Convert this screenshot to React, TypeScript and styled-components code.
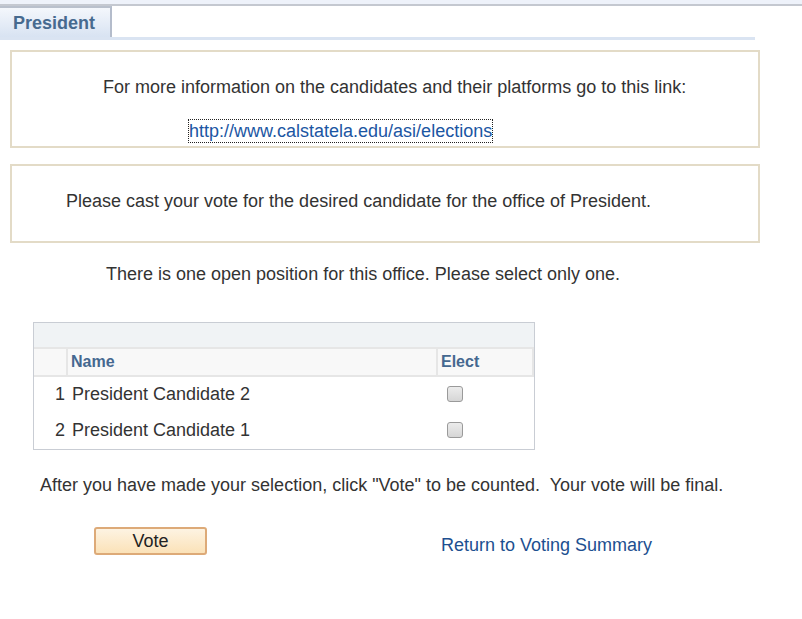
import React from "react";
import styled, { createGlobalStyle } from "styled-components";

const GlobalStyle = createGlobalStyle`
  html, body { margin: 0; padding: 0; background: #ffffff; }
  body {
    font-family: "Liberation Sans", Arial, sans-serif;
    font-size: 18px;
    color: #333333;
  }
`;

const Page = styled.div`
  width: 802px;
  min-height: 619px;
`;

const TopStrip = styled.div`
  height: 4px;
  background: #eef2fa;
  border-bottom: 2px solid #c4c8d0;
`;

const TabRow = styled.div`
  display: flex;
`;

const Tab = styled.div`
  box-sizing: border-box;
  width: 112px;
  height: 31px;
  padding: 6px 0 0 13px;
  border-top: 2px solid #b9c0cc;
  border-right: 2px solid #b4bccb;
  background: linear-gradient(#f4f7fc, #d8e3f2);
  font-size: 18px;
  line-height: 18px;
  font-weight: bold;
  color: #476a8f;
`;

const TabUnderline = styled.div`
  width: 755px;
  height: 3px;
  background: #dae4f2;
`;

const InfoBox = styled.div<{ $pt: number; $pb: number; $mt: number }>`
  box-sizing: border-box;
  width: 750px;
  margin: ${(p) => p.$mt}px 0 0 10px;
  padding: ${(p) => p.$pt}px 0 ${(p) => p.$pb}px 0;
  border: 2px solid #e3dbc7;
`;

const Line = styled.p<{ $pl: number; $mt?: number }>`
  margin: ${(p) => p.$mt ?? 0}px 0 0 0;
  padding-left: ${(p) => p.$pl}px;
  line-height: 18px;
  white-space: nowrap;
`;

const ExtLink = styled.a`
  color: #1b56a3;
  text-decoration: none;
  outline: 1px dotted #222;
  padding: 1px 0;
`;

const Note = styled.p<{ $pl: number; $mt: number }>`
  margin: ${(p) => p.$mt}px 0 0 0;
  padding-left: ${(p) => p.$pl}px;
  line-height: 18px;
  white-space: nowrap;
`;

const Grid = styled.div`
  box-sizing: border-box;
  width: 502px;
  margin: 39px 0 0 33px;
  border: 1px solid #c9cdd4;
`;

const GridBar = styled.div`
  height: 24px;
  background: #f0f3f5;
`;

const HeaderRow = styled.div`
  display: grid;
  grid-template-columns: 32px 368px 94px;
  column-gap: 2px;
  padding: 2px 2px 2px 0;
  background: #e6e6e6;
`;

const HeaderCell = styled.div`
  height: 26px;
  padding-left: 3px;
  background: #f8f8f8;
  font-size: 16px;
  font-weight: bold;
  color: #456890;
  line-height: 26px;
`;

const DataRow = styled.div`
  display: grid;
  grid-template-columns: 32px 368px 94px;
  column-gap: 2px;
  height: 36px;
  padding-top: 8px;
  box-sizing: border-box;
  line-height: 18px;
`;

const NumCell = styled.div`
  text-align: right;
  padding-right: 1px;
`;

const NameCell = styled.div`
  padding-left: 4px;
`;

const CheckCell = styled.div`
  padding: 1px 0 0 9px;
`;

const Check = styled.input.attrs({ type: "checkbox" })`
  appearance: none;
  -webkit-appearance: none;
  display: block;
  margin: 0;
  width: 16px;
  height: 16px;
  box-sizing: border-box;
  border: 1px solid #9a9a9a;
  border-radius: 3px;
  background: linear-gradient(#ececec, #d6d6d6);
`;

const ActionRow = styled.div`
  display: flex;
  align-items: flex-start;
  margin-top: 33px;
  padding-left: 94px;
`;

const VoteButton = styled.button`
  box-sizing: border-box;
  width: 113px;
  height: 28px;
  padding: 0;
  border: 2px solid #ddaa78;
  border-radius: 3px;
  background: linear-gradient(#fdf3e2, #fbe2b8);
  font-family: "Liberation Sans", Arial, sans-serif;
  font-size: 18px;
  color: #222;
  line-height: 20px;
  cursor: pointer;
`;

const SummaryLink = styled.a`
  margin: 9px 0 0 234px;
  color: #1d4f90;
  text-decoration: none;
  line-height: 18px;
`;

const candidates = [
  { n: 1, name: "President Candidate 2" },
  { n: 2, name: "President Candidate 1" },
];

export default function App() {
  return (
    <Page>
      <GlobalStyle />
      <TopStrip />
      <TabRow>
        <Tab>President</Tab>
      </TabRow>
      <TabUnderline />
      <InfoBox $mt={10} $pt={26} $pb={6}>
        <Line $pl={91}>
          For more information on the candidates and their platforms go to this link:
        </Line>
        <Line $pl={177} $mt={26}>
          <ExtLink href="#">http://www.calstatela.edu/asi/elections</ExtLink>
        </Line>
      </InfoBox>
      <InfoBox $mt={16} $pt={26} $pb={31}>
        <Line $pl={54}>
          Please cast your vote for the desired candidate for the office of President.
        </Line>
      </InfoBox>
      <Note $pl={106} $mt={22}>
        There is one open position for this office. Please select only one.
      </Note>
      <Grid>
        <GridBar />
        <HeaderRow>
          <HeaderCell />
          <HeaderCell>Name</HeaderCell>
          <HeaderCell>Elect</HeaderCell>
        </HeaderRow>
        {candidates.map((c) => (
          <DataRow key={c.n}>
            <NumCell>{c.n}</NumCell>
            <NameCell>{c.name}</NameCell>
            <CheckCell>
              <Check aria-label={`Elect ${c.name}`} />
            </CheckCell>
          </DataRow>
        ))}
      </Grid>
      <Note $pl={40} $mt={26}>
        After you have made your selection, click "Vote" to be counted.&nbsp; Your vote will be final.
      </Note>
      <ActionRow>
        <VoteButton>Vote</VoteButton>
        <SummaryLink href="#">Return to Voting Summary</SummaryLink>
      </ActionRow>
    </Page>
  );
}
